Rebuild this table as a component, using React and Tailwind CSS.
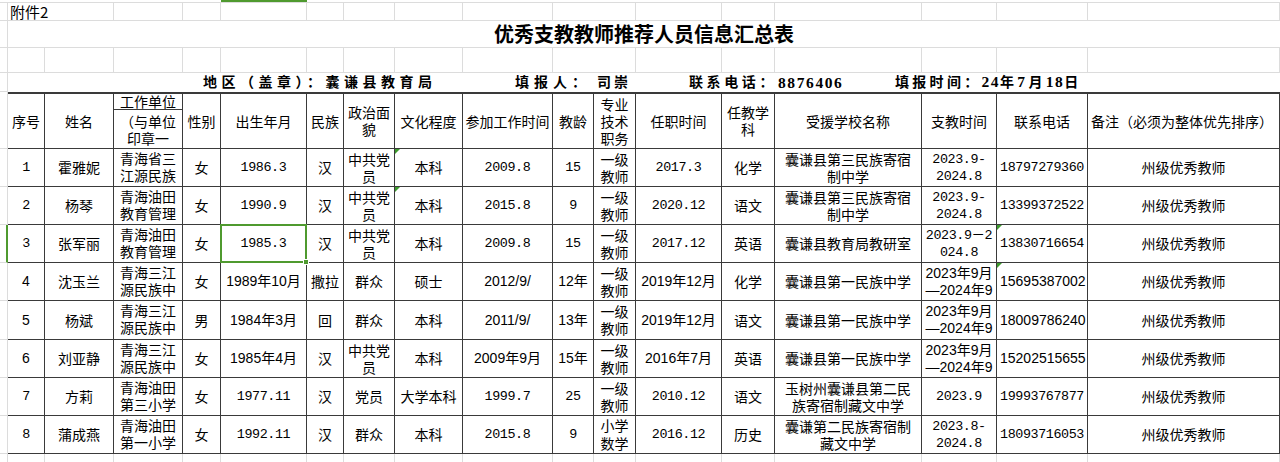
import React from 'react';

const W = ['w-[37px]','w-[69px]','w-[69px]','w-[38px]','w-[86px]','w-[37px]','w-[51px]','w-[68px]','w-[90px]','w-[41px]','w-[42px]','w-[86px]','w-[53px]','w-[147px]','w-[75px]','w-[91px]','w-[192px]'];
const ROW0_W = ['w-[106px]','w-[69px]','w-[38px]','w-[86px]','w-[37px]','w-[51px]','w-[68px]','w-[90px]','w-[83px]','w-[86px]','w-[53px]','w-[147px]','w-[75px]','w-[91px]','w-[192px]'];
const EMPTY_W = ['w-[37px]','w-[69px]','w-[69px]','w-[38px]','w-[86px]','w-[37px]','w-[51px]','w-[68px]','w-[90px]','w-[83px]','w-[86px]','w-[53px]','w-[147px]','w-[75px]','w-[91px]','w-[192px]'];

const fc = "font-['Noto_Sans_CJK_SC',sans-serif] text-[14px]";
const fm = "font-['Liberation_Mono','Noto_Sans_CJK_SC',monospace] text-[13.4px] tracking-[-0.4px]";
const fa = "font-['Liberation_Sans','Noto_Sans_CJK_SC',sans-serif] text-[14px]";

const m = (t, o = {}) => ({ t, f: 'm', ...o });
const a = (t, o = {}) => ({ t, f: 'a', ...o });
const c = (t, o = {}) => ({ t, f: 'c', ...o });
const wu = (t) => ({ t, f: 'c', top: true, lh: 'leading-[17px]', pt: 'pt-[1px]' });

const header = [
  c('序号'), c('姓名'), 'WU', c('性别'), c('出生年月'), c('民族'), c(['政治面', '貌']), c('文化程度'),
  c('参加工作时间'), c('教龄'), c(['专业', '技术', '职务']), c('任职时间'),
  c(['任教学', '科']), c('受援学校名称'), c('支教时间'), c('联系电话'),
  c('备注（必须为整体优先排序）', { left: true }),
];

const rows = [
  { h: 'h-[38px]', cells: [m('1'), c('霍雅妮'), wu(['青海省三', '江源民族']), c('女'), m('1986.3'), c('汉'), c(['中共党', '员']), c('本科', { tri: true }), m('2009.8'), m('15'), c(['一级', '教师']), m('2017.3'), c('化学'), c(['囊谦县第三民族寄宿', '制中学']), m(['2023.9-', '2024.8']), m('18797279360', { left: true }), c('州级优秀教师')] },
  { h: 'h-[38px]', cells: [m('2'), c('杨琴'), wu(['青海油田', '教育管理']), c('女'), m('1990.9'), c('汉'), c(['中共党', '员']), c('本科', { tri: true }), m('2015.8'), m('9'), c(['一级', '教师']), m('2020.12'), c('语文'), c(['囊谦县第三民族寄宿', '制中学']), m(['2023.9-', '2024.8']), m('13399372522', { left: true }), c('州级优秀教师')] },
  { h: 'h-[38px]', sel: true, cells: [m('3'), c('张军丽'), wu(['青海油田', '教育管理']), c('女'), m('1985.3', { sel: true }), c('汉'), c(['中共党', '员']), c('本科'), m('2009.8'), m('15'), c(['一级', '教师']), m('2017.12'), c('英语'), c('囊谦县教育局教研室'), m(['2023.9－2', '024.8']), m('13830716654', { left: true, tri: true }), c('州级优秀教师')] },
  { h: 'h-[38px]', cells: [a('4'), c('沈玉兰'), wu(['青海三江', '源民族中']), c('女'), a('1989年10月'), c('撒拉'), c('群众'), c('硕士'), a('2012/9/'), a('12年'), c(['一级', '教师']), a('2019年12月'), c('化学'), c('囊谦县第一民族中学'), a(['2023年9月', '—2024年9']), a('15695387002', { left: true, tri: true }), c('州级优秀教师')] },
  { h: 'h-[39px]', cells: [a('5'), c('杨斌'), wu(['青海三江', '源民族中']), c('男'), a('1984年3月'), c('回'), c('群众'), c('本科'), a('2011/9/'), a('13年'), c(['一级', '教师']), a('2019年12月'), c('语文'), c('囊谦县第一民族中学'), a(['2023年9月', '—2024年9']), a('18009786240', { left: true }), c('州级优秀教师')] },
  { h: 'h-[38px]', cells: [a('6'), c('刘亚静'), wu(['青海三江', '源民族中']), c('女'), a('1985年4月'), c('汉'), c(['中共党', '员']), c('本科'), a('2009年9月'), a('15年'), c(['一级', '教师']), a('2016年7月'), c('英语'), c('囊谦县第一民族中学'), a(['2023年9月', '—2024年9']), a('15202515655', { left: true }), c('州级优秀教师')] },
  { h: 'h-[38px]', cells: [m('7'), c('方莉'), wu(['青海油田', '第三小学']), c('女'), m('1977.11'), c('汉'), c('党员'), c('大学本科'), m('1999.7'), m('25'), c(['一级', '教师']), m('2010.12'), c('语文'), c(['玉树州囊谦县第二民', '族寄宿制藏文中学']), m('2023.9'), m('19993767877', { left: true }), c('州级优秀教师')] },
  { h: 'h-[38px]', cells: [m('8'), c('蒲成燕'), wu(['青海油田', '第一小学']), c('女'), m('1992.11'), c('汉'), c('群众'), c('本科'), m('2015.8'), m('9'), c(['小学', '数学'], { top: true, lh: 'leading-[18px]' }), m('2016.12'), c('历史'), c(['囊谦第二民族寄宿制', '藏文中学']), m(['2023.8-', '2024.8']), m('18093716053', { left: true }), c('州级优秀教师')] },
];

function Lines({ lines }) {
  return lines.map((l, i) => (
    <React.Fragment key={i}>
      {i > 0 && <br />}
      {l}
    </React.Fragment>
  ));
}

function Cell({ w, s, head }) {
  const font = s.f === 'm' ? fm : s.f === 'a' ? fa : fc;
  const lines = Array.isArray(s.t) ? s.t : [s.t];
  const align = s.left ? 'justify-start text-left pl-[3px]' : 'justify-center text-center';
  const vert = s.top ? 'items-start' : 'items-center';
  const lh = s.lh || 'leading-[17px]';
  return (
    <div className={`${w} shrink-0 relative flex ${vert} ${align} border-r border-b border-[#3a3a3a] ${head ? 'border-t-2' : ''} ${s.sel ? 'z-10' : 'overflow-hidden'}`}>
      <div className={`${font} ${lh} ${s.pt || ''} whitespace-nowrap text-black`}>
        <Lines lines={lines} />
      </div>
      {s.tri && <div className="absolute left-0 top-0 w-0 h-0 border-t-[5px] border-r-[5px] border-t-[#3d9a2d] border-r-transparent" />}
      {s.sel && (
        <div className="absolute -left-[1px] -top-[1px] -right-[1px] -bottom-[1px] border-2 border-[#4f9a2f]">
          <div className="absolute -right-[4px] -bottom-[4px] w-[6px] h-[6px] bg-[#4f9a2f] border border-white" />
        </div>
      )}
    </div>
  );
}

function Gutter({ sel }) {
  return <div className={`w-[8px] shrink-0 border-b border-[#dcdcdc] ${sel ? 'border-r-2 border-r-[#4f9a2f]' : 'border-r'}`} />;
}

export default function App() {
  return (
    <div className="w-[1280px] h-[462px] overflow-hidden bg-white text-black">
      <div className="h-[3px] border-b border-[#dcdcdc]">
        <div className="ml-[221px] w-[86px] h-[2px] bg-[#4f9a2f]" />
      </div>
      <div className="flex h-[18px]">
        <Gutter />
        {ROW0_W.map((w, i) => (
          <div key={i} className={`${w} shrink-0 border-r border-b border-[#dcdcdc] flex items-center`}>
            {i === 0 && <span className={`${fc} text-[15px] pl-[2px] leading-[18px]`}>附件2</span>}
          </div>
        ))}
      </div>
      <div className="flex h-[27px]">
        <Gutter />
        <div className="flex-1 border-b border-[#dcdcdc] flex items-center justify-center">
          <span className="font-['Noto_Sans_CJK_SC',sans-serif] text-[20px] font-bold leading-[26px] text-black">优秀支教教师推荐人员信息汇总表</span>
        </div>
      </div>
      <div className="flex h-[25px]">
        <Gutter />
        {EMPTY_W.map((w, i) => (
          <div key={i} className={`${w} shrink-0 border-r border-b border-[#dcdcdc]`} />
        ))}
      </div>
      <div className="flex h-[19px]">
        <Gutter />
        <div className="flex-1 flex items-end font-['Liberation_Serif','Noto_Sans_CJK_SC',serif] font-bold text-[14px] leading-[18px] text-black whitespace-nowrap">
          <span className="w-[195px] shrink-0" />
          <span className="w-[312px] shrink-0 tracking-[4.5px]">地区（盖章）：囊谦县教育局</span>
          <span className="w-[82px] shrink-0 tracking-[5px]">填报人：</span>
          <span className="w-[92px] shrink-0 tracking-[3px]">司崇</span>
          <span className="w-[89px] shrink-0 tracking-[3.6px]">联系电话：</span>
          <span className="w-[117px] shrink-0 tracking-[1.6px] text-[15.5px]">8876406</span>
          <span className="shrink-0 tracking-[3.3px]">填报时间：<span className="text-[15.5px] tracking-[1.5px]">24</span>年<span className="text-[15.5px]">7</span>月<span className="text-[15.5px] tracking-[1.5px]">18</span>日</span>
        </div>
      </div>
      <div className="flex h-[57px]">
        <Gutter />
        {header.map((s, i) =>
          s === 'WU' ? (
            <div key={i} className={`${W[i]} shrink-0 border-r border-b border-t-2 border-[#3a3a3a] overflow-hidden flex flex-col ${fc}`}>
              <div className="h-[16px] leading-[15px] border-b border-[#3a3a3a] text-center">工作单位</div>
              <div className="pt-[3px] leading-[17px] text-center">
                （与单位<br />印章一
              </div>
            </div>
          ) : (
            <Cell key={i} w={W[i]} s={s} head />
          )
        )}
      </div>
      {rows.map((r, ri) => (
        <div key={ri} className={`flex ${r.h}`}>
          <Gutter sel={r.sel} />
          {r.cells.map((s, i) => (
            <Cell key={i} w={W[i]} s={s} />
          ))}
        </div>
      ))}
      <div className="flex h-[12px]">
        <Gutter />
        {W.map((w, i) => (
          <div key={i} className={`${w} shrink-0 border-r border-[#dcdcdc]`} />
        ))}
      </div>
    </div>
  );
}
